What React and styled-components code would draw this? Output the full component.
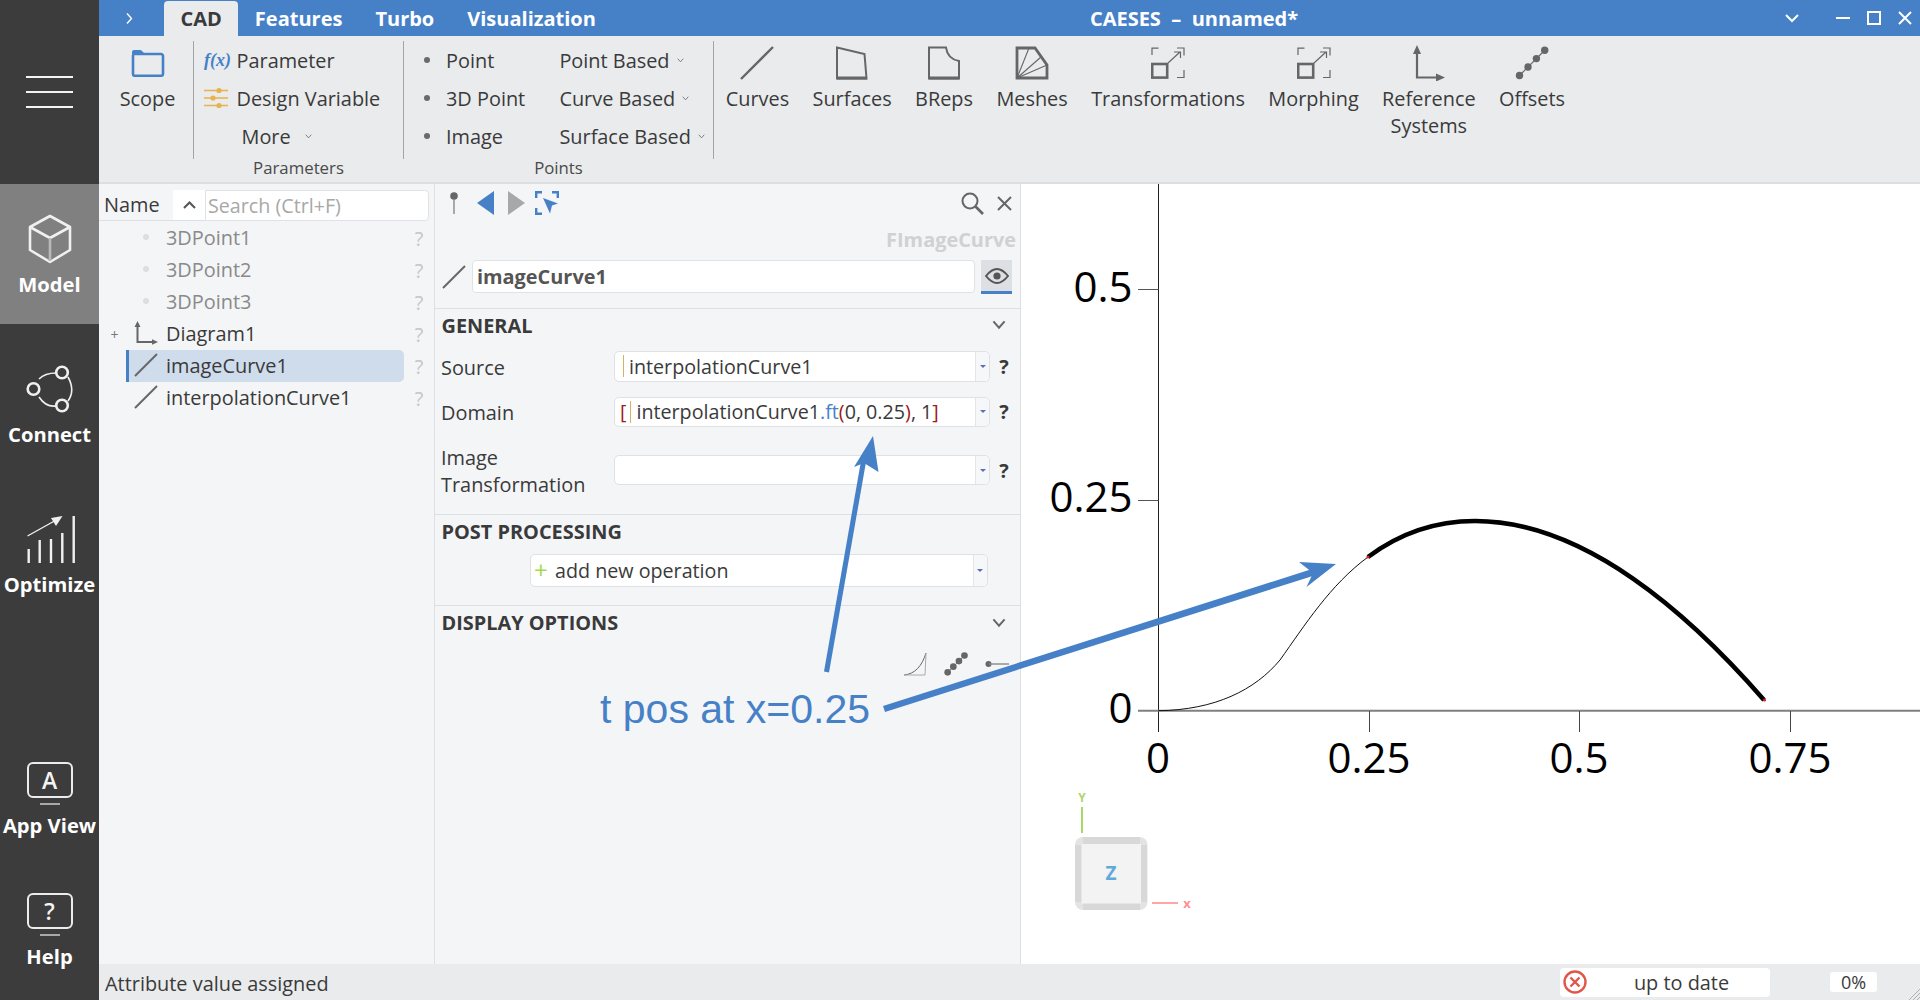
import React from 'react';
import styled, { createGlobalStyle } from 'styled-components';

const Global = createGlobalStyle`
  html, body { margin: 0; padding: 0; height: 100%; overflow: hidden; }
  body { font-family: "Open Sans", "DejaVu Sans", sans-serif; font-size: 19.9px; color: #3a3a3a; background: #f3f5f7; }
  #root { height: 100%; }
`;

const BLUE = '#4681c8';
const ICON = '#666666';

const Page = styled.div`
  position: relative;
  display: flex;
  width: 1920px;
  height: 1000px;
  overflow: hidden;
`;

/* ---------- left navigation ---------- */
const Sidebar = styled.nav`
  width: 99px;
  flex: none;
  display: flex;
  flex-direction: column;
  background: #3c3c3c;
`;
const MenuBlock = styled.div`
  height: 184px;
  flex: none;
  padding-top: 76px;
  box-sizing: border-box;
  display: flex;
  flex-direction: column;
  align-items: center;
  gap: 13px;
`;
const MenuLine = styled.span`
  display: block;
  width: 47px;
  height: 2px;
  background: #f4f4f4;
`;
const NavList = styled.div`
  display: flex;
  flex-direction: column;
  gap: 10px;
`;
const NavItem = styled.div`
  height: 140px;
  display: flex;
  flex-direction: column;
  align-items: center;
  padding-top: 30px;
  box-sizing: border-box;
  background: ${p => (p.$active ? '#808080' : 'transparent')};
`;
const NavIcon = styled.div`
  height: 50px;
  display: flex;
  align-items: center;
  justify-content: center;
`;
const NavLabel = styled.div`
  margin-top: 6.5px;
  font-size: 20.2px;
  line-height: 26px;
  font-weight: 700;
  color: #ffffff;
  white-space: nowrap;
`;
const BottomNav = styled.div`
  margin-top: auto;
  display: flex;
  flex-direction: column;
`;
const BottomItem = styled.div`
  height: 131px;
  display: flex;
  flex-direction: column;
  align-items: center;
  padding-top: 24px;
  box-sizing: border-box;
`;
const ScreenBox = styled.div`
  width: 46px;
  height: 36px;
  box-sizing: border-box;
  border: 2px solid #ececec;
  border-radius: 6px;
  display: flex;
  align-items: center;
  justify-content: center;
  color: #f4f4f4;
  font-size: 23px;
  font-weight: 600;
  line-height: 1;
`;
const ScreenFoot = styled.div`
  width: 20px;
  height: 2px;
  margin-top: 5px;
  background: #a8a8a8;
`;
const BottomLabel = styled(NavLabel)`
  margin-top: 7px;
`;

/* ---------- main column ---------- */
const Main = styled.div`
  flex: 1;
  min-width: 0;
  display: flex;
  flex-direction: column;
`;
const TitleBar = styled.header`
  height: 36px;
  flex: none;
  display: flex;
  align-items: stretch;
  background: ${BLUE};
  color: #fff;
`;
const Caret = styled.div`
  width: 65px;
  display: flex;
  align-items: center;
  padding-left: 27px;
  box-sizing: border-box;
`;
const Tab = styled.div`
  margin-top: ${p => (p.$active ? '1px' : '0')};
  padding: 0 16.5px;
  display: flex;
  align-items: center;
  font-size: 20px;
  font-weight: 700;
  border-radius: 4px 4px 0 0;
  color: ${p => (p.$active ? '#3a3a3a' : '#ffffff')};
  background: ${p => (p.$active ? '#e9ebed' : 'transparent')};
`;
const Title = styled.div`
  margin-left: 477.5px;
  display: flex;
  align-items: center;
  font-size: 20px;
  font-weight: 700;
  white-space: pre;
`;
const WindowButtons = styled.div`
  margin-left: auto;
  display: flex;
  align-items: center;
  padding-right: 8px;
`;
const WinButton = styled.div`
  display: flex;
  margin-left: ${p => p.$gap}px;
`;

const Ribbon = styled.div`
  height: 148px;
  flex: none;
  box-sizing: border-box;
  display: flex;
  padding-top: 5px;
  background: #e9ebed;
  border-bottom: 2px solid #dcdee0;
`;
const RibbonSep = styled.div`
  width: 1px;
  height: 118px;
  flex: none;
  background: #a2a4a6;
`;
const ScopeGroup = styled.div`
  width: 94px;
  flex: none;
  display: flex;
  flex-direction: column;
  align-items: center;
  padding: 4px 0 0 3px;
  box-sizing: border-box;
`;
const Group = styled.div`
  width: ${p => p.$w}px;
  flex: none;
  display: flex;
  flex-direction: column;
`;
const GroupRows = styled.div`
  height: 115px;
  box-sizing: border-box;
`;
const GroupLabel = styled.div`
  font-size: 16.8px;
  line-height: 24px;
  text-align: center;
  color: #4a4a4a;
`;
const RowLine = styled.div`
  height: 38px;
  display: flex;
  align-items: center;
  padding-left: ${p => p.$pl || 0}px;
  white-space: nowrap;
`;
const RowIcon = styled.div`
  width: ${p => p.$w}px;
  flex: none;
  display: flex;
  align-items: center;
`;
const Fx = styled.span`
  font-family: "Liberation Serif", serif;
  font-style: italic;
  font-weight: 700;
  font-size: 18px;
  color: ${BLUE};
`;
const Drop = styled.span`
  display: flex;
  margin-left: ${p => p.$gap || 7}px;
`;
const PointsGrid = styled.div`
  display: grid;
  grid-template-columns: 135.4px 1fr;
  padding-left: 20px;
`;
const Bullet = styled.span`
  display: block;
  width: 6px;
  height: 6px;
  border-radius: 50%;
  background: #6a6a6a;
`;
const BigButtons = styled.div`
  display: flex;
`;
const BigButton = styled.div`
  padding: 4px 11.7px 0;
  display: flex;
  flex-direction: column;
  align-items: center;
`;
const BigIcon = styled.div`
  height: 36px;
  display: flex;
  align-items: center;
  justify-content: center;
`;
const BigLabel = styled.div`
  margin-top: 4px;
  line-height: 27px;
  text-align: center;
  white-space: pre-line;
`;

const Content = styled.div`
  flex: 1;
  min-height: 0;
  display: flex;
`;

/* ---------- tree ---------- */
const TreePane = styled.section`
  width: 336px;
  flex: none;
  box-sizing: border-box;
  background: #f3f5f7;
  border-right: 1px solid #dcdfe3;
`;
const TreeHead = styled.div`
  height: 37px;
  display: flex;
  align-items: stretch;
  padding-right: 5px;
  margin-bottom: 1px;
`;
const HeadName = styled.div`
  width: 74px;
  box-sizing: border-box;
  padding-left: 5px;
  display: flex;
  align-items: center;
  padding-top: 5px;
  border-bottom: 1px solid #dcdfe3;
`;
const SortButton = styled.div`
  width: 32px;
  margin-top: 6px;
  background: #fff;
  border-bottom: 1px solid #dcdfe3;
  display: flex;
  align-items: center;
  justify-content: center;
`;
const Search = styled.div`
  flex: 1;
  margin-top: 6px;
  box-sizing: border-box;
  padding-left: 2px;
  font-size: 19.7px;
  background: #fff;
  border: 1px solid #e0e2e5;
  border-radius: 0 4px 4px 0;
  color: #a8a8a8;
  display: flex;
  align-items: center;
`;
const TreeRow = styled.div`
  height: 32px;
  display: flex;
  align-items: center;
`;
const Expander = styled.div`
  width: 27px;
  padding-left: 4px;
  box-sizing: border-box;
  text-align: center;
  font-size: 14px;
  color: #777;
`;
const TreeBody = styled.div`
  width: 278px;
  height: 32px;
  flex: none;
  display: flex;
  align-items: center;
  box-sizing: border-box;
  padding-bottom: 2px;
  border-radius: 0 5px 5px 0;
  color: ${p => (p.$dim ? '#8a8a8a' : '#3a3a3a')};
  background: ${p => (p.$selected ? '#cfdcec' : 'transparent')};
  box-shadow: ${p => (p.$selected ? `inset 3px 0 0 ${BLUE}` : 'none')};
`;
const TreeIcon = styled.div`
  width: 40px;
  flex: none;
  display: flex;
  justify-content: center;
`;
const TreeDot = styled.span`
  display: block;
  width: 6px;
  height: 6px;
  border-radius: 50%;
  background: #dcdfe2;
`;
const TreeHelp = styled.div`
  flex: 1;
  text-align: center;
  color: #c6c6c6;
`;

/* ---------- properties ---------- */
const PropPane = styled.section`
  width: 586px;
  flex: none;
  box-sizing: border-box;
  background: #f3f5f7;
  border-right: 1px solid #dcdfe3;
`;
const PropTools = styled.div`
  height: 24px;
  margin-top: 7px;
  display: flex;
  align-items: center;
  padding: 0 8px 0 13px;
`;
const ToolIcon = styled.div`
  display: flex;
  margin-left: ${p => p.$gap || 0}px;
`;
const TypeName = styled.div`
  margin-top: 13px;
  padding-right: 4px;
  text-align: right;
  line-height: 24px;
  font-weight: 700;
  color: #d0d1d2;
`;
const NameRow = styled.div`
  margin-top: 8px;
  height: 34px;
  display: flex;
  padding: 0 8px 0 7px;
`;
const NameIcon = styled.div`
  width: 30px;
  flex: none;
  display: flex;
  align-items: center;
`;
const NameInput = styled.div`
  flex: 1;
  height: 32.5px;
  box-sizing: border-box;
  padding-left: 4px;
  display: flex;
  align-items: center;
  background: #fff;
  border: 1px solid #e0e2e5;
  border-radius: 4px;
  font-weight: 700;
  color: #555555;
`;
const EyeButton = styled.div`
  width: 31px;
  margin-left: 6px;
  box-sizing: border-box;
  background: #dcdfe3;
  border-bottom: 3px solid ${BLUE};
  display: flex;
  align-items: center;
  justify-content: center;
`;
const Section = styled.div`
  margin-top: ${p => p.$mt || 0}px;
  border-top: 1px solid #dcdfe3;
`;
const SectionHead = styled.div`
  height: ${p => p.$h}px;
  display: flex;
  align-items: center;
  justify-content: space-between;
  padding: 0 14px 0 6.5px;
  font-weight: 700;
  font-size: 19.9px;
  color: #3a3a3a;
`;
const FormRows = styled.div`
  margin-top: 10px;
  display: flex;
  flex-direction: column;
  gap: 15px;
`;
const FormRow = styled.div`
  min-height: 30.5px;
  display: flex;
  align-items: center;
  padding-left: 6px;
`;
const FormLabel = styled.div`
  width: 173px;
  flex: none;
  box-sizing: border-box;
  padding-top: 2px;
  line-height: 27px;
`;
const Combo = styled.div`
  width: ${p => p.$w}px;
  height: ${p => p.$h}px;
  flex: none;
  box-sizing: border-box;
  display: flex;
  background: #fff;
  border: 1px solid #dfe1e4;
  border-radius: 5px;
  margin-left: ${p => p.$ml || 0}px;
  margin-top: ${p => p.$mt || 0}px;
`;
const ComboText = styled.div`
  flex: 1;
  display: flex;
  align-items: center;
  padding-left: ${p => p.$pl || 0}px;
  font-size: 19.7px;
  white-space: pre;
  overflow: hidden;
`;
const ComboDrop = styled.div`
  width: 13px;
  flex: none;
  border-left: 1px solid #e3e5e8;
  background: #f6f7f8;
  border-radius: 0 5px 5px 0;
  display: flex;
  align-items: center;
  justify-content: center;
`;
const DropMark = styled.span`
  display: block;
  width: 0;
  height: 0;
  border-left: 3px solid transparent;
  border-right: 3px solid transparent;
  border-top: 3px solid #5b6fb5;
`;
const Help = styled.div`
  width: 28px;
  text-align: center;
  font-weight: 700;
  color: #3a3a3a;
`;
const Tok = styled.span`
  color: ${p => p.$c};
`;
const CursorBar = styled.span`
  display: inline-block;
  width: 1px;
  height: 22px;
  margin: 0 5px 0 ${p => p.$ml || 0}px;
  background: ${p => p.$c};
`;
const Plus = styled.span`
  width: 24px;
  flex: none;
  color: #a5d94f;
  font-size: 24px;
  line-height: 1;
  padding-left: 3px;
  box-sizing: border-box;
`;
const DisplayIcons = styled.div`
  margin-top: 12.5px;
  padding-right: 11px;
  display: flex;
  justify-content: flex-end;
  gap: 17px;
`;

/* ---------- chart ---------- */
const ChartPane = styled.section`
  flex: 1;
  min-width: 0;
  background: #fff;
  display: flex;
`;
const StatusBar = styled.footer`
  height: 36px;
  flex: none;
  display: flex;
  align-items: center;
  background: #e9ebed;
  padding-left: 6px;
`;
const StatusText = styled.span`
  margin-top: 2px;
`;
const StatusBox = styled.div`
  margin-left: auto;
  width: 210px;
  height: 29px;
  box-sizing: border-box;
  position: relative;
  display: flex;
  align-items: center;
  justify-content: center;
  padding-left: 33px;
  background: #fff;
  border-radius: 4px;
  white-space: nowrap;
`;
const StatusIcon = styled.span`
  position: absolute;
  left: 3px;
  top: 2.5px;
  display: flex;
`;
const Percent = styled.div`
  width: 47px;
  height: 20px;
  margin-left: 60px;
  margin-right: 43px;
  border-radius: 3px;
  background: #fff;
  display: flex;
  align-items: center;
  justify-content: center;
  font-size: 18px;
`;
const Grip = styled.svg`
  position: absolute;
  right: 0;
  bottom: 0;
`;
const OverlayArt = styled.svg`
  position: absolute;
  left: 0;
  top: 0;
  pointer-events: none;
`;
const Note = styled.div`
  position: absolute;
  left: 600px;
  top: 686px;
  font-family: "Liberation Sans", Arial, sans-serif;
  font-size: 41px;
  line-height: 46px;
  color: ${BLUE};
  white-space: nowrap;
`;

/* ---------- drawings ---------- */
const Chevron = ({ size = 10, color = '#6a6a6a', w = 1.2 }) => (
  <svg width={size} height={size * 0.7} viewBox="0 0 10 7" fill="none" stroke={color} strokeWidth={w}>
    <path d="M1 1l4 4.500L9 1" />
  </svg>
);
const Slash = ({ s = 24 }) => (
  <svg width={s} height={s} viewBox="0 0 24 24" stroke="#666" strokeWidth="2" fill="none"><path d="M1 23L23 1" /></svg>
);
const AxesIcon = ({ w = 24, h = 24 }) => (
  <svg width={w} height={h} viewBox="0 0 24 24" fill="#666" stroke="#666">
    <path d="M3.500 4V21H20" fill="none" strokeWidth="2" />
    <path d="M3.500 0L6.500 6H.5zM24 21l-6-2.800v5.600z" stroke="none" />
  </svg>
);

const TransformIcon = () => (
  <svg width="34" height="32" viewBox="0 0 34 32" fill="none" stroke="#666">
    <rect x="1.200" y="17" width="15" height="13.600" strokeWidth="2.6" />
    <path d="M1 8V1.200h6.500M26 1h7v7.500M33 23v7.500h-7" strokeWidth="1.2" />
    <path d="M17 16L29 5M23 5h6.500v6" strokeWidth="1.2" />
  </svg>
);
const OffsetsIcon = ({ s = 36, scale = 1 }) => (
  <svg width={s} height={s} viewBox="0 0 36 36" fill="#666" stroke="none">
    <path d="M5.500 30.500L30.500 5.500" stroke="#666" strokeWidth="1.2" />
    <circle cx="5.500" cy="30.500" r={3.7 * scale} />
    <circle cx="14" cy="22" r={3.7 * scale} />
    <circle cx="22.400" cy="13.600" r={3.7 * scale} />
    <circle cx="30.700" cy="5.300" r={3.7 * scale} />
  </svg>
);

const bigIcons = {
  curves: (
    <svg width="36" height="34" viewBox="0 0 36 34" stroke={ICON} strokeWidth="2.4" fill="none"><path d="M2 33L34 1" /></svg>
  ),
  surfaces: (
    <svg width="34" height="34" viewBox="0 0 34 34" fill="none" stroke={ICON}>
      <path d="M2 1.500L29.500 8l2 24.500H2z" strokeWidth="2" />
      <path d="M2 32h30" strokeWidth="3" />
    </svg>
  ),
  breps: (
    <svg width="34" height="34" viewBox="0 0 34 34" fill="none" stroke={ICON}>
      <path d="M2 1.500H19c1 8 5 12 13 13.500V32.500H2z" strokeWidth="2" />
      <path d="M2 32h30" strokeWidth="3" />
    </svg>
  ),
  meshes: (
    <svg width="34" height="34" viewBox="0 0 34 34" fill="none" stroke={ICON}>
      <path d="M2 2H20L32 19V32H2z" strokeWidth="2.8" />
      <path d="M2 32L14 2M2 32L26 11M2 32L32 19" strokeWidth="1.1" />
    </svg>
  ),
  transform: <TransformIcon />,
  reference: (
    <svg width="32" height="36" viewBox="0 0 32 36" fill={ICON} stroke={ICON}>
      <path d="M4 6V32.500H26" fill="none" strokeWidth="2.2" />
      <path d="M4 0L8 9H0zM32 32.500l-9-4v8z" stroke="none" />
    </svg>
  ),
  offsets: <OffsetsIcon />,
};

const CubeIcon = () => (
  <svg width="44" height="50" viewBox="0 0 44 50" fill="none" stroke="#f0f0f0" strokeWidth="2.6" strokeLinejoin="round">
    <path d="M22 2L42 13V36L22 48L2 36V13z" />
    <path d="M2 13L22 24L42 13" />
    <path d="M22 24V47" stroke="#b9b9b9" />
  </svg>
);
const ConnectIcon = () => (
  <svg width="50" height="50" viewBox="0 0 50 50" fill="none" stroke="#f0f0f0">
    <path d="M14 15C18 11 22 9 31 9" strokeWidth="1.6" />
    <path d="M43 13C48 22 48 30 43 37" strokeWidth="1.6" />
    <path d="M14 33C18 39 24 43 31 42" strokeWidth="1.6" />
    <circle cx="37" cy="8.500" r="5.800" strokeWidth="2.6" />
    <circle cx="8.500" cy="25" r="5.800" strokeWidth="2.6" />
    <circle cx="37" cy="41.500" r="5.800" strokeWidth="2.6" />
  </svg>
);
const OptimizeIcon = () => (
  <svg width="50" height="50" viewBox="0 0 50 50" fill="none" stroke="#f0f0f0">
    <g strokeWidth="2.4">
      <path d="M3.700 49V35M14.700 49V26M26 49V25M37.300 49V19M48.700 49V2" />
    </g>
    <path d="M2.500 22L33 5" strokeWidth="1.4" />
    <path d="M37.500 2L26 4l5 8z" fill="#f0f0f0" stroke="none" />
  </svg>
);

const Chart = () => {
  const font = { fontFamily: '"Open Sans", sans-serif', fontSize: 42, fill: '#000' };
  return (
    <svg width="899" height="780" viewBox="1021 184 899 780" style={{ display: 'block' }}>
      <path d="M1158.500 184V732" stroke="#222" strokeWidth="1" />
      <path d="M1138 710.700H1920" stroke="#808080" strokeWidth="2" />
      <path d="M1138 500.500h20.500M1138 289.500h20.500" stroke="#555" strokeWidth="1" />
      <path d="M1369.500 711V732M1579.500 711V732M1790.500 711V732" stroke="#444" strokeWidth="1" />
      <g style={font} textAnchor="end">
        <text x="1132.500" y="302">0.5</text>
        <text x="1132.500" y="512">0.25</text>
        <text x="1132.500" y="723">0</text>
      </g>
      <g style={font} textAnchor="middle">
        <text x="1158" y="773">0</text>
        <text x="1369" y="773">0.25</text>
        <text x="1579" y="773">0.5</text>
        <text x="1790" y="773">0.75</text>
      </g>
      <path d="M1158.400 710.700C1215 710 1255 690 1280 660C1305 625 1330 585 1368 557" fill="none" stroke="#111" strokeWidth="1" />
      <path d="M1368 557C1400 533 1435 521 1475 521C1585 521 1690 615 1764 700" fill="none" stroke="#000" strokeWidth="4.6" />
      <circle cx="1368" cy="557" r="1.600" fill="#c22" />
      <circle cx="1764.500" cy="700" r="1.600" fill="#c22" />
      {/* orientation cube */}
      <path d="M1082 807V833" stroke="#aad765" strokeWidth="2" />
      <text x="1082" y="802" textAnchor="middle" style={{ fontFamily: '"Open Sans", sans-serif', fontSize: 12, fontWeight: 700, fill: '#aad765' }}>Y</text>
      <rect x="1075" y="837" width="72.500" height="73" rx="8" fill="#e3e3e3" />
      <path d="M1083 837h57v7h-57zM1083 903h57v7h-57zM1075 845h7v57h-7zM1140 845h7v57h-7z" fill="#d8d8d8" />
      <rect x="1081.500" y="844" width="59.500" height="59.500" fill="#f3f3f3" />
      <text x="1111" y="880" textAnchor="middle" style={{ fontFamily: '"Open Sans", sans-serif', fontSize: 19, fontWeight: 700, fill: '#62a9db' }}>Z</text>
      <path d="M1152 903H1178" stroke="#ff8f8f" strokeWidth="1.6" />
      <text x="1187" y="908" textAnchor="middle" style={{ fontFamily: '"Open Sans", sans-serif', fontSize: 13, fontWeight: 700, fill: '#ff8f8f' }}>x</text>
    </svg>
  );
};

const treeRows = [
  { name: '3DPoint1', dot: true, dim: true },
  { name: '3DPoint2', dot: true, dim: true },
  { name: '3DPoint3', dot: true, dim: true },
  { name: 'Diagram1', axes: true, expand: true },
  { name: 'imageCurve1', slash: true, selected: true },
  { name: 'interpolationCurve1', slash: true },
];
const bigButtons = [
  ['Curves', 'curves'], ['Surfaces', 'surfaces'], ['BReps', 'breps'], ['Meshes', 'meshes'],
  ['Transformations', 'transform'], ['Morphing', 'transform'], ['Reference\nSystems', 'reference'], ['Offsets', 'offsets'],
];

export default function App() {
  return (
    <>
      <Global />
      <Page>
        <Sidebar>
          <MenuBlock><MenuLine /><MenuLine /><MenuLine /></MenuBlock>
          <NavList>
            <NavItem $active><NavIcon><CubeIcon /></NavIcon><NavLabel>Model</NavLabel></NavItem>
            <NavItem><NavIcon><ConnectIcon /></NavIcon><NavLabel>Connect</NavLabel></NavItem>
            <NavItem><NavIcon><OptimizeIcon /></NavIcon><NavLabel>Optimize</NavLabel></NavItem>
          </NavList>
          <BottomNav>
            <BottomItem><ScreenBox>A</ScreenBox><ScreenFoot /><BottomLabel>App View</BottomLabel></BottomItem>
            <BottomItem><ScreenBox>?</ScreenBox><ScreenFoot /><BottomLabel>Help</BottomLabel></BottomItem>
          </BottomNav>
        </Sidebar>
        <Main>
          <TitleBar>
            <Caret>
              <svg width="7" height="13" viewBox="0 0 7 13" fill="none" stroke="#fff" strokeWidth="1.4"><path d="M1 1.500l4.500 5-4.500 5" /></svg>
            </Caret>
            <Tab $active>CAD</Tab>
            <Tab>Features</Tab>
            <Tab>Turbo</Tab>
            <Tab>Visualization</Tab>
            <Title>{'CAESES  –  unnamed*'}</Title>
            <WindowButtons>
              <WinButton>
                <svg width="14" height="9" viewBox="0 0 14 9" fill="none" stroke="#fff" strokeWidth="2"><path d="M1 1l6 6 6-6" /></svg>
              </WinButton>
              <WinButton $gap={37}>
                <svg width="14" height="2" viewBox="0 0 14 2" fill="#fff"><rect width="14" height="2" /></svg>
              </WinButton>
              <WinButton $gap={17}>
                <svg width="14" height="14" viewBox="0 0 14 14" fill="none" stroke="#fff" strokeWidth="2"><rect x="1" y="1" width="12" height="12" /></svg>
              </WinButton>
              <WinButton $gap={17}>
                <svg width="14" height="14" viewBox="0 0 14 14" fill="none" stroke="#fff" strokeWidth="2"><path d="M1 1l12 12M13 1L1 13" /></svg>
              </WinButton>
            </WindowButtons>
          </TitleBar>
          <Ribbon>
            <ScopeGroup>
              <BigIcon>
                <svg width="34" height="28" viewBox="0 0 34 28" fill="none" stroke={BLUE}>
                  <path d="M2 6V25c0 1 .8 1.800 1.800 1.800H30c1 0 2-.8 2-1.800V7c0-1-1-2-2-2H2" strokeWidth="2.6" />
                  <path d="M1 6V3c0-1 .8-2 2-2h6c2 0 2.500 2 4 3z" fill={BLUE} stroke="none" />
                </svg>
              </BigIcon>
              <BigLabel>Scope</BigLabel>
            </ScopeGroup>
            <RibbonSep />
            <Group $w={209}>
              <GroupRows>
                <RowLine $pl={10}><RowIcon $w={32.5}><Fx>f(x)</Fx></RowIcon>Parameter</RowLine>
                <RowLine $pl={10}>
                  <RowIcon $w={32.5}>
                    <svg width="24" height="22" viewBox="0 0 24 22" fill="none" stroke="#e8b24c" strokeWidth="1.6">
                      <path d="M0 3.500h24M0 11h24M0 18.500h24" />
                      <g fill="#e8b24c" stroke="none"><circle cx="15" cy="3.500" r="2.600" /><circle cx="9" cy="11" r="2.600" /><circle cx="15" cy="18.500" r="2.600" /></g>
                    </svg>
                  </RowIcon>
                  Design Variable
                </RowLine>
                <RowLine $pl={47.5}>More<Drop $gap={14}><Chevron size={7} /></Drop></RowLine>
              </GroupRows>
              <GroupLabel>Parameters</GroupLabel>
            </Group>
            <RibbonSep />
            <Group $w={309}>
              <GroupRows>
                <PointsGrid>
                  <RowLine><RowIcon $w={22}><Bullet /></RowIcon>Point</RowLine>
                  <RowLine>Point Based<Drop><Chevron size={7} /></Drop></RowLine>
                  <RowLine><RowIcon $w={22}><Bullet /></RowIcon>3D Point</RowLine>
                  <RowLine>Curve Based<Drop><Chevron size={7} /></Drop></RowLine>
                  <RowLine><RowIcon $w={22}><Bullet /></RowIcon>Image</RowLine>
                  <RowLine>Surface Based<Drop><Chevron size={7} /></Drop></RowLine>
                </PointsGrid>
              </GroupRows>
              <GroupLabel>Points</GroupLabel>
            </Group>
            <RibbonSep />
            <BigButtons>
              {bigButtons.map(([label, icon]) => (
                <BigButton key={label}>
                  <BigIcon>{bigIcons[icon]}</BigIcon>
                  <BigLabel>{label}</BigLabel>
                </BigButton>
              ))}
            </BigButtons>
          </Ribbon>
          <Content>
            <TreePane>
              <TreeHead>
                <HeadName>Name</HeadName>
                <SortButton>
                  <svg width="13" height="8" viewBox="0 0 13 8" fill="none" stroke="#555" strokeWidth="2"><path d="M1 7l5.500-5.500L12 7" /></svg>
                </SortButton>
                <Search>Search (Ctrl+F)</Search>
              </TreeHead>
              {treeRows.map(r => (
                <TreeRow key={r.name}>
                  <Expander>{r.expand ? '+' : ''}</Expander>
                  <TreeBody $selected={r.selected} $dim={r.dim}>
                    <TreeIcon>
                      {r.dot && <TreeDot />}
                      {r.axes && <AxesIcon />}
                      {r.slash && <Slash />}
                    </TreeIcon>
                    {r.name}
                  </TreeBody>
                  <TreeHelp>?</TreeHelp>
                </TreeRow>
              ))}
            </TreePane>
            <PropPane>
              <PropTools>
                <ToolIcon>
                  <svg width="12" height="24" viewBox="0 0 12 24" fill="#666" stroke="#888"><circle cx="6" cy="5" r="3.800" stroke="none" /><path d="M6 8V23" strokeWidth="1.4" /></svg>
                </ToolIcon>
                <ToolIcon $gap={17}>
                  <svg width="17" height="24" viewBox="0 0 17 24" fill={BLUE}><path d="M17 0V24L0 12z" /></svg>
                </ToolIcon>
                <ToolIcon $gap={14}>
                  <svg width="17" height="24" viewBox="0 0 17 24" fill="#a6a8aa"><path d="M0 0V24L17 12z" /></svg>
                </ToolIcon>
                <ToolIcon $gap={10}>
                  <svg width="24" height="24" viewBox="0 0 24 24" fill="none" stroke={BLUE} strokeWidth="2.4">
                    <path d="M1.200 7V1.200H7M17 1.200h5.800V7M1.200 17v5.800H7" />
                    <path d="M8 7l15 5.500-6 2-2 8z" fill={BLUE} stroke="none" />
                  </svg>
                </ToolIcon>
                <ToolIcon $gap={402}>
                  <svg width="23" height="23" viewBox="0 0 23 23" fill="none" stroke="#666" strokeWidth="2"><circle cx="9" cy="9" r="7.500" /><path d="M14.500 14.500L22 22" strokeWidth="2.6" /></svg>
                </ToolIcon>
                <ToolIcon $gap={13}>
                  <svg width="15" height="15" viewBox="0 0 15 15" fill="none" stroke="#666" strokeWidth="2"><path d="M1 1l13 13M14 1L1 14" /></svg>
                </ToolIcon>
              </PropTools>
              <TypeName>FImageCurve</TypeName>
              <NameRow>
                <NameIcon><Slash /></NameIcon>
                <NameInput>imageCurve1</NameInput>
                <EyeButton>
                  <svg width="24" height="16" viewBox="0 0 24 16" fill="none" stroke="#555" strokeWidth="2"><path d="M1 8c4-5 7.500-7 11-7s7 2 11 7c-4 5-7.500 7-11 7S5 13 1 8z" /><circle cx="12" cy="8" r="3.600" fill="#555" stroke="none" /></svg>
                </EyeButton>
              </NameRow>
              <Section $mt={14}>
                <SectionHead $h={32}>GENERAL<Chevron size={14} color="#666" w={1.4} /></SectionHead>
                <FormRows>
                  <FormRow>
                    <FormLabel>Source</FormLabel>
                    <Combo $w={376} $h={30.5}>
                      <ComboText $pl={8}><CursorBar $c="#d8b06a" />interpolationCurve1</ComboText>
                      <ComboDrop><DropMark /></ComboDrop>
                    </Combo>
                    <Help>?</Help>
                  </FormRow>
                  <FormRow>
                    <FormLabel>Domain</FormLabel>
                    <Combo $w={376} $h={30.5}>
                      <ComboText $pl={5}>
                        <Tok $c="#a01818">[</Tok>
                        <CursorBar $c="#d8b06a" $ml={4} />interpolationCurve1
                        <Tok $c="#4681c8">.ft</Tok><Tok $c="#a01818">(</Tok>0, 0.25<Tok $c="#a01818">)</Tok>, 1<Tok $c="#a01818">]</Tok>
                      </ComboText>
                      <ComboDrop><DropMark /></ComboDrop>
                    </Combo>
                    <Help>?</Help>
                  </FormRow>
                  <FormRow>
                    <FormLabel>Image<br />Transformation</FormLabel>
                    <Combo $w={376} $h={30.5}>
                      <ComboText />
                      <ComboDrop><DropMark /></ComboDrop>
                    </Combo>
                    <Help>?</Help>
                  </FormRow>
                </FormRows>
              </Section>
              <Section $mt={16}>
                <SectionHead $h={32}>POST PROCESSING</SectionHead>
                <Combo $w={457.5} $h={33} $ml={95} $mt={6.5}>
                  <ComboText><Plus>+</Plus>add new operation</ComboText>
                  <ComboDrop><DropMark /></ComboDrop>
                </Combo>
              </Section>
              <Section $mt={18.5}>
                <SectionHead $h={33.5}>DISPLAY OPTIONS<Chevron size={14} color="#666" w={1.4} /></SectionHead>
                <DisplayIcons>
                  <svg width="24" height="24" viewBox="0 0 24 24" fill="none" stroke="#666" strokeWidth="1"><path d="M1 23C12 22 19 14 23 1" /><path d="M1 23H22L23 1" stroke="#aaa" /></svg>
                  <OffsetsIcon s={24} scale={1.35} />
                  <svg width="24" height="24" viewBox="0 0 24 24" fill="#666" stroke="#888"><circle cx="3.500" cy="12" r="3" stroke="none" /><path d="M4 12H24" strokeWidth="1.4" /></svg>
                </DisplayIcons>
              </Section>
            </PropPane>
            <ChartPane><Chart /></ChartPane>
          </Content>
          <StatusBar>
            <StatusText>Attribute value assigned</StatusText>
            <StatusBox>
              <StatusIcon>
                <svg width="24" height="24" viewBox="0 0 24 24" fill="none" stroke="#e0574a" strokeWidth="2.4"><circle cx="12" cy="12" r="10.500" /><path d="M7.500 7.500l9 9M16.500 7.500l-9 9" /></svg>
              </StatusIcon>
              up to date
            </StatusBox>
            <Percent>0%</Percent>
          </StatusBar>
        </Main>
        <Grip width="11" height="11" viewBox="0 0 11 11" stroke="#aeb0b2" strokeWidth="1"><path d="M0 11L11 0M4 11l7-7M8 11l3-3" /></Grip>
        <OverlayArt width="1920" height="1000" viewBox="0 0 1920 1000">
          <g fill={BLUE} stroke="none">
            <path d="M824 671.500L829 672.500L866 462L861 461z" />
            <path d="M873 436L854 467L864 463L878.500 472z" />
            <path d="M883 706L885 712L1316 575L1312 569z" />
            <path d="M1336 564L1299 562L1313 573L1306.500 587z" />
          </g>
        </OverlayArt>
        <Note>t pos at x=0.25</Note>
      </Page>
    </>
  );
}
